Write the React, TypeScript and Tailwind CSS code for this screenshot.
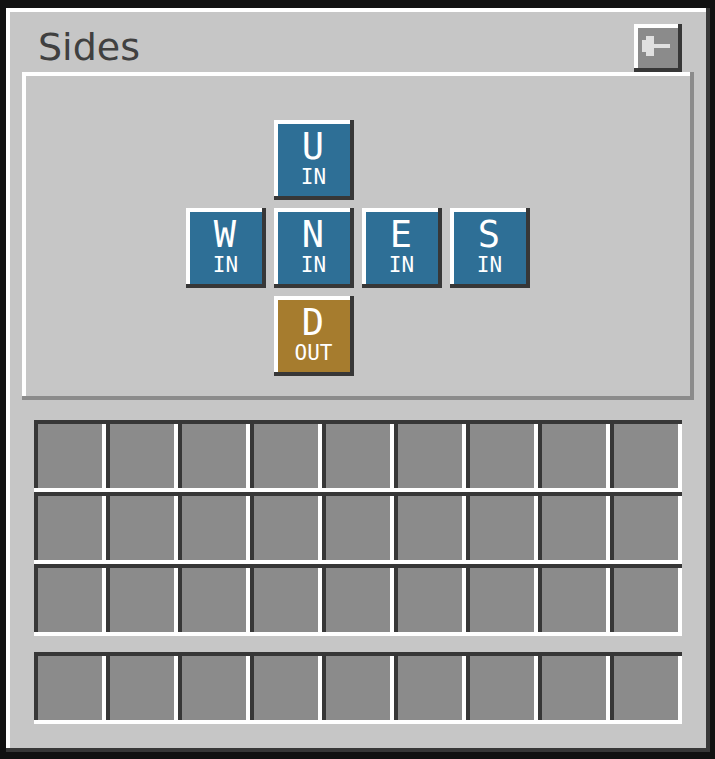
import React from "react";

const raised =
  "shadow-[inset_-4px_0_0_#373737,inset_0_-4px_0_#373737,inset_0_4px_0_#ffffff,inset_4px_0_0_#ffffff]";
const sunken =
  "shadow-[inset_0_4px_0_#373737,inset_0_-4px_0_#ffffff,inset_4px_0_0_#373737,inset_-4px_0_0_#ffffff]";

type Side = { letter: string; mode: string; pos: string; out?: boolean };

const sides: Side[] = [
  { letter: "U", mode: "IN", pos: "col-start-2 row-start-1" },
  { letter: "W", mode: "IN", pos: "col-start-1 row-start-2" },
  { letter: "N", mode: "IN", pos: "col-start-2 row-start-2" },
  { letter: "E", mode: "IN", pos: "col-start-3 row-start-2" },
  { letter: "S", mode: "IN", pos: "col-start-4 row-start-2" },
  { letter: "D", mode: "OUT", pos: "col-start-2 row-start-3", out: true },
];

function SideButton({ s }: { s: Side }) {
  return (
    <div
      className={`${s.pos} w-[80px] h-[80px] flex flex-col items-center text-white font-['DejaVu_Sans_Mono',monospace] ${raised} ${
        s.out ? "bg-[#a67c2e]" : "bg-[#2e6f96]"
      }`}
    >
      <div className="pt-[8px] text-[37px] leading-[37px] -ml-[2px]">{s.letter}</div>
      <div className="mt-[2px] text-[21px] leading-[21px] -ml-[1px]">{s.mode}</div>
    </div>
  );
}

function Slot() {
  return <div className={`w-[72px] h-[72px] bg-[#8b8b8b] ${sunken}`} />;
}

function SlotRow() {
  return (
    <div className="flex">
      {Array.from({ length: 9 }).map((_, i) => (
        <Slot key={i} />
      ))}
    </div>
  );
}

export default function App() {
  return (
    <div className="w-[715px] h-[759px] bg-[#111111] pt-[8px] pl-[6px] overflow-hidden">
      <div className={`w-[704px] h-[744px] bg-[#c6c6c6] pt-4 px-4 ${raised}`}>
        <div className="flex items-start justify-between h-[48px]">
          <div className="ml-4 mt-[3.5px] text-[38px] leading-[38px] text-[#404040] font-['DejaVu_Sans',sans-serif]">
            Sides
          </div>
          <div className={`mr-3 w-[48px] h-[48px] bg-[#8b8b8b] ${raised} flex items-center justify-center`}>
            <svg width="48" height="48" viewBox="0 0 48 48" shapeRendering="crispEdges">
              <rect x="8" y="16" width="4" height="12" fill="#e0e0e0" />
              <rect x="12" y="12" width="8" height="20" fill="#e0e0e0" />
              <rect x="20" y="20" width="16" height="4" fill="#e0e0e0" />
            </svg>
          </div>
        </div>
        <div
          className={`h-[328px] bg-[#c6c6c6] pt-[48px] shadow-[inset_-4px_0_0_#8b8b8b,inset_0_-4px_0_#8b8b8b,inset_0_4px_0_#ffffff,inset_4px_0_0_#ffffff]`}
        >
          <div className="grid grid-cols-[repeat(4,80px)] grid-rows-[repeat(3,80px)] gap-2 justify-center">
            {sides.map((s) => (
              <SideButton key={s.letter} s={s} />
            ))}
          </div>
        </div>
        <div className="mx-3 mt-[20px]">
          <SlotRow />
          <SlotRow />
          <SlotRow />
          <div className="mt-4">
            <SlotRow />
          </div>
        </div>
      </div>
    </div>
  );
}
